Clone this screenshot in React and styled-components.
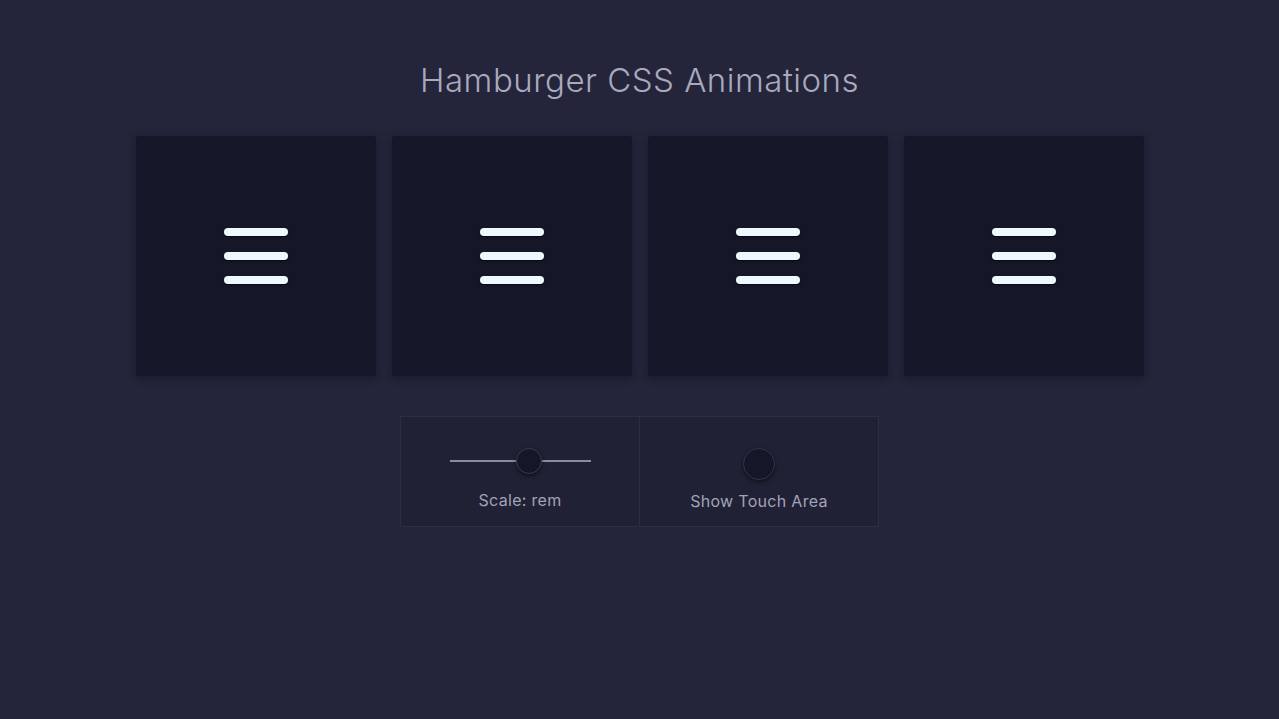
import React from 'react';
import styled, { createGlobalStyle } from 'styled-components';

const GlobalStyle = createGlobalStyle`
  html, body {
    margin: 0;
    padding: 0;
    background: #24253a;
    font-family: 'Inter', 'Open Sans', sans-serif;
  }
`;

const Page = styled.div`
  min-height: 719px;
  display: flex;
  flex-direction: column;
  align-items: center;
  padding-top: 58px;
  box-sizing: border-box;
`;

const Title = styled.h1`
  margin: 0;
  font-weight: 300;
  font-size: 33px;
  line-height: 44px;
  color: #a9a9bd;
  letter-spacing: 0.5px;
`;

const Grid = styled.div`
  display: grid;
  grid-template-columns: repeat(4, 240px);
  gap: 16px;
  margin-top: 34px;
`;

const Card = styled.div`
  width: 240px;
  height: 240px;
  background: #151628;
  border-radius: 3px;
  box-shadow: 0 2px 8px rgba(10, 10, 20, 0.45);
  display: flex;
  align-items: center;
  justify-content: center;
`;

const Burger = styled.div`
  display: flex;
  flex-direction: column;
  gap: 16px;
  margin-top: -1px;
`;

const Bar = styled.span`
  display: block;
  width: 64px;
  height: 8px;
  border-radius: 4px;
  background: #f0f8ff;
  box-shadow: 0 1px 2px rgba(0, 0, 0, 0.6);
`;

const Controls = styled.div`
  display: flex;
  margin-top: 40px;
`;

const Cell = styled.div`
  width: 238px;
  height: 109px;
  background: #202134;
  border: 1px solid #2d2e45;
  display: flex;
  flex-direction: column;
  align-items: center;
  & + & {
    border-left: none;
  }
`;

const SliderWrap = styled.div`
  position: relative;
  width: 141px;
  height: 26px;
  margin-top: 31px;
  display: flex;
  align-items: center;
`;

const Track = styled.div`
  width: 100%;
  height: 2px;
  background: #8b8ca0;
`;

const Thumb = styled.div`
  position: absolute;
  left: ${(p) => p.pos}%;
  top: 0;
  width: 24px;
  height: 24px;
  margin-left: -12px;
  border-radius: 50%;
  background: #151628;
  border: 1px solid #3a3b52;
  box-shadow: 0 2px 4px rgba(0, 0, 0, 0.5);
`;

const Toggle = styled.div`
  width: 30px;
  height: 30px;
  margin-top: 31px;
  border-radius: 50%;
  background: #151628;
  border: 1px solid #33344b;
  box-shadow: 0 2px 4px rgba(0, 0, 0, 0.5);
`;

const Label = styled.div`
  font-size: 16px;
  color: #a3a3b8;
  margin-top: ${(p) => p.top}px;
  letter-spacing: 0.3px;
`;

export default function App() {
  const cards = [0, 1, 2, 3];
  return (
    <>
      <GlobalStyle />
      <Page>
        <Title>Hamburger CSS Animations</Title>
        <Grid>
          {cards.map((i) => (
            <Card key={i}>
              <Burger>
                <Bar />
                <Bar />
                <Bar />
              </Burger>
            </Card>
          ))}
        </Grid>
        <Controls>
          <Cell>
            <SliderWrap>
              <Track />
              <Thumb pos={56} />
            </SliderWrap>
            <Label top={16}>Scale: rem</Label>
          </Cell>
          <Cell>
            <Toggle />
            <Label top={11}>Show Touch Area</Label>
          </Cell>
        </Controls>
      </Page>
    </>
  );
}
